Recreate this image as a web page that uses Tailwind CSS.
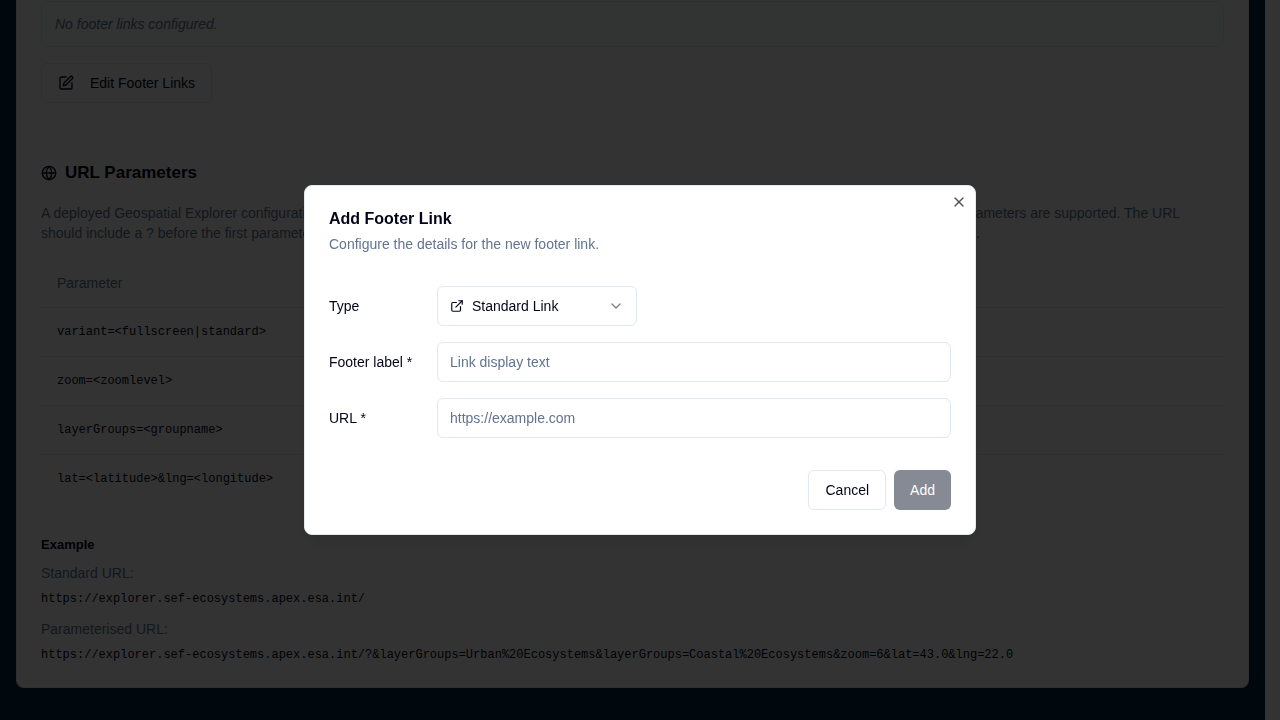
<!DOCTYPE html>
<html lang="en">
<head>
    <meta charset="UTF-8">
    <meta name="viewport" content="width=device-width, initial-scale=1.0">
    <script src="https://cdn.jsdelivr.net/npm/@tailwindcss/browser@4"></script>
    <title>Geospatial Explorer - Footer Links</title>
</head>
<body class="h-screen overflow-hidden bg-white pr-[15px] font-['Liberation_Sans',Arial,sans-serif] text-sm text-slate-950">
    <main class="min-h-screen bg-[#002a42] px-4 pb-8">
        <div class="rounded-b-lg border border-t-0 border-slate-200 bg-white px-6 pt-px pb-6">
            <p class="rounded-lg border border-[#e6f0ee] bg-[#f8fffc] px-[13px] py-3 italic text-slate-500">No footer links configured.</p>
            <button class="mt-4 flex h-10 items-center rounded-md border border-slate-200 px-4 font-medium">
                <svg class="mr-4 h-4 w-4" viewBox="0 0 24 24" fill="none" stroke="currentColor" stroke-width="2" stroke-linecap="round" stroke-linejoin="round"><path d="M12 3H5a2 2 0 0 0-2 2v14a2 2 0 0 0 2 2h14a2 2 0 0 0 2-2v-7"/><path d="M18.375 2.625a1 1 0 0 1 3 3l-9.013 9.014a2 2 0 0 1-.853.505l-2.873.84a.5.5 0 0 1-.62-.62l.84-2.873a2 2 0 0 1 .506-.852z"/></svg>
                Edit Footer Links
            </button>

            <!-- URL parameters -->
            <h2 class="mt-14 flex items-center gap-2 text-[17px] leading-7 font-semibold">
                <svg class="h-4 w-4" viewBox="0 0 24 24" fill="none" stroke="currentColor" stroke-width="2" stroke-linecap="round" stroke-linejoin="round"><circle cx="12" cy="12" r="10"/><path d="M12 2a14.5 14.5 0 0 0 0 20 14.5 14.5 0 0 0 0-20"/><path d="M2 12h20"/></svg>
                URL Parameters
            </h2>
            <p class="mt-4 text-slate-500">A deployed Geospatial Explorer configuration can be customised through its web address when it is opened in a viewer. The following optional URL parameters are supported. The URL should include a ? before the first parameter, and &amp; between each of the parameters that follow, in any order, for example ?zoom=6&amp;lat=43.0&amp;lng=22.0.</p>
            <table class="mt-4 w-full text-left">
                <thead>
                    <tr class="h-12 border-b border-slate-200 text-slate-500">
                        <th class="w-2/5 px-4 font-medium">Parameter</th>
                        <th class="px-4 font-medium">Description</th>
                    </tr>
                </thead>
                <tbody class="font-['Liberation_Mono',monospace] text-xs">
                    <tr class="h-[49px] border-b border-slate-200"><td class="px-4" colspan="2">variant=&lt;fullscreen|standard&gt;</td></tr>
                    <tr class="h-[49px] border-b border-slate-200"><td class="px-4" colspan="2">zoom=&lt;zoomlevel&gt;</td></tr>
                    <tr class="h-[49px] border-b border-slate-200"><td class="px-4" colspan="2">layerGroups=&lt;groupname&gt;</td></tr>
                    <tr class="h-[49px]"><td class="px-4" colspan="2">lat=&lt;latitude&gt;&amp;lng=&lt;longitude&gt;</td></tr>
                </tbody>
            </table>

            <h3 class="mt-8 text-[13px] leading-5 font-semibold">Example</h3>
            <p class="mt-2 text-slate-500">Standard URL:</p>
            <code class="mt-2 block font-['Liberation_Mono',monospace] text-xs">https://explorer.sef-ecosystems.apex.esa.int/</code>
            <p class="mt-3 text-slate-500">Parameterised URL:</p>
            <code class="mt-2 block font-['Liberation_Mono',monospace] text-xs">https://explorer.sef-ecosystems.apex.esa.int/?&amp;layerGroups=Urban%20Ecosystems&amp;layerGroups=Coastal%20Ecosystems&amp;zoom=6&amp;lat=43.0&amp;lng=22.0</code>
        </div>
    </main>

    <!-- Dialog -->
    <div class="fixed inset-0 flex items-center justify-center bg-black/80">
        <form role="dialog" aria-labelledby="dialog-title" class="relative grid w-full max-w-2xl gap-4 rounded-lg border border-slate-200 bg-white p-6 shadow-lg">
            <div class="flex flex-col gap-1.5">
                <h2 id="dialog-title" class="text-base leading-[18px] font-semibold">Add Footer Link</h2>
                <p class="text-slate-500">Configure the details for the new footer link.</p>
            </div>
            <div class="grid gap-4 py-4">
                <div class="flex items-center">
                    <label for="link-type" class="w-[108px] font-medium">Type</label>
                    <div class="relative w-[200px]">
                        <select id="link-type" class="h-10 w-full appearance-none rounded-md border border-slate-200 bg-white pr-8 pl-[34px]">
                            <option>Standard Link</option>
                        </select>
                        <svg class="pointer-events-none absolute top-3 left-3 h-4 w-4 p-px" viewBox="0 0 24 24" fill="none" stroke="currentColor" stroke-width="2" stroke-linecap="round" stroke-linejoin="round"><path d="M15 3h6v6"/><path d="M10 14 21 3"/><path d="M18 13v6a2 2 0 0 1-2 2H5a2 2 0 0 1-2-2V8a2 2 0 0 1 2-2h6"/></svg>
                        <svg class="pointer-events-none absolute top-3 right-[13px] h-4 w-4 opacity-50" viewBox="0 0 24 24" fill="none" stroke="currentColor" stroke-width="2" stroke-linecap="round" stroke-linejoin="round"><path d="m6 9 6 6 6-6"/></svg>
                    </div>
                </div>
                <div class="flex items-center">
                    <label for="footer-label" class="w-[108px] font-medium">Footer label *</label>
                    <input id="footer-label" type="text" placeholder="Link display text" class="h-10 flex-1 rounded-md border border-slate-200 px-3 placeholder:text-slate-500">
                </div>
                <div class="flex items-center">
                    <label for="footer-url" class="w-[108px] font-medium">URL *</label>
                    <input id="footer-url" type="url" placeholder="https://example.com" class="h-10 flex-1 rounded-md border border-slate-200 px-3 placeholder:text-slate-500">
                </div>
            </div>
            <div class="flex justify-end gap-2">
                <button type="button" class="h-10 rounded-md border border-slate-200 px-4 font-medium">Cancel</button>
                <button type="submit" disabled class="h-10 rounded-md bg-slate-900 px-4 font-medium text-slate-50 opacity-50">Add</button>
            </div>
            <button type="button" aria-label="Close" class="absolute top-2 right-2 opacity-70">
                <svg class="h-4 w-4" viewBox="0 0 24 24" fill="none" stroke="currentColor" stroke-width="2" stroke-linecap="round" stroke-linejoin="round"><path d="M18 6 6 18"/><path d="m6 6 12 12"/></svg>
            </button>
        </form>
    </div>
</body>
</html>
